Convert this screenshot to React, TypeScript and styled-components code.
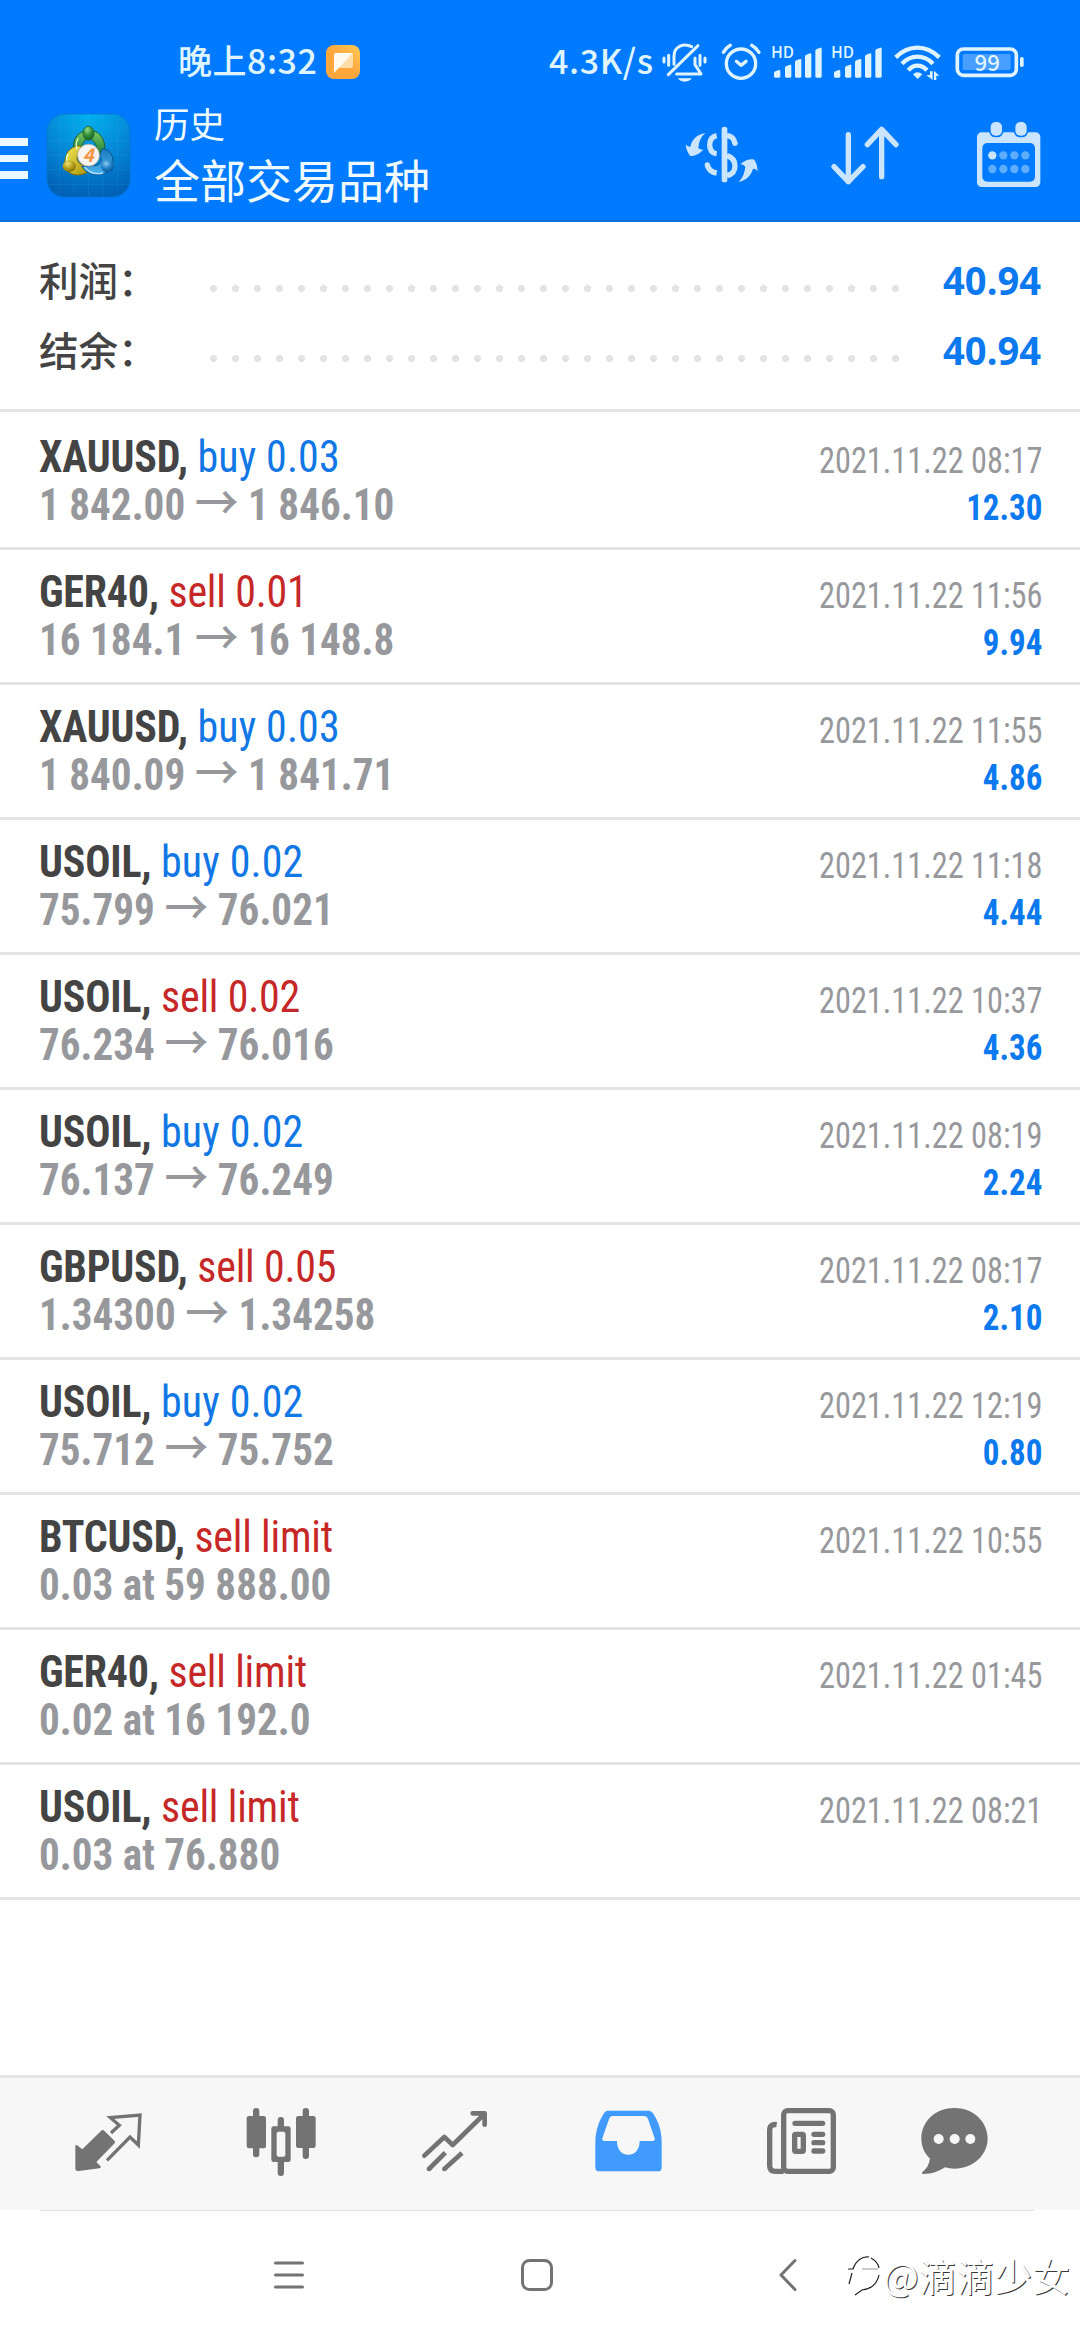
import React from "react";
import styled, { createGlobalStyle } from "styled-components";

const CJK = '"Noto Sans CJK SC", "Noto Sans", sans-serif';
const CONDENSED = '"Roboto Condensed", Roboto, "Noto Sans CJK SC", sans-serif';

const Global = createGlobalStyle`
  *, *::before, *::after { box-sizing: border-box; }
  body { margin: 0; background: #fff; }
`;

const Screen = styled.div`
  position: relative;
  display: flex;
  flex-direction: column;
  width: 1080px;
  height: 2340px;
  overflow: hidden;
  background: #fff;
  font-family: ${CJK};
`;

/* ---------- header ---------- */

const Header = styled.header`
  display: flex;
  flex-direction: column;
  height: 222px;
  background: #007aff;
  border-bottom: 2px solid #1070dc;
`;

const StatusBar = styled.div`
  display: flex;
  align-items: flex-start;
  height: 100px;
  padding: 34px 0 0 178px;
  color: #dff4ff;
`;

const StatusText = styled.span`
  font-size: 34px;
  font-weight: 500;
  line-height: 52px;
  letter-spacing: 0.6px;
  white-space: nowrap;
`;

const Clock = styled(StatusText)`
  width: 148px;
  letter-spacing: 0.5px;
`;

const Speed = styled(StatusText)`
  width: 112px;
  margin-left: 189px;
`;

const Glyph = styled.svg<{ $gap?: number; $top?: number }>`
  display: block;
  flex: none;
  overflow: visible;
  margin: ${(p) => p.$top ?? 0}px 0 0 ${(p) => p.$gap ?? 0}px;
`;

const Toolbar = styled.div`
  display: flex;
  align-items: flex-start;
  height: 120px;
`;

const MenuButton = styled.div`
  display: flex;
  flex-direction: column;
  gap: 9px;
  width: 28px;
  padding-top: 38px;
`;

const MenuBar = styled.span`
  height: 7.5px;
  background: #ecf8ff;
`;

const LogoBox = styled.div`
  width: 83px;
  height: 83px;
  margin: 14px 0 0 19px;
`;

const Titles = styled.div`
  display: flex;
  flex-direction: column;
  width: 522px;
  margin: -1px 0 0 24px;
  color: #effaff;
`;

const Caption = styled.div`
  font-size: 35.5px;
  line-height: 48px;
`;

const Title = styled.div`
  font-size: 46px;
  line-height: 62px;
`;

/* ---------- summary ---------- */

const Summary = styled.section`
  display: flex;
  flex-direction: column;
  height: 190px;
  padding: 24px 39px 0;
  border-bottom: 3px solid #e3e3e3;
`;

const SummaryRow = styled.div`
  display: flex;
  align-items: center;
  height: 70px;
`;

const SummaryLabel = styled.span`
  width: 171px;
  margin-bottom: 6px;
  font-size: 39.5px;
  font-weight: 500;
  color: #444;
`;

const Dots = styled.span`
  flex: none;
  width: 689px;
  height: 7px;
  margin-top: 14px;
  background: radial-gradient(circle at 3.5px 3.5px, #e3e3e3 3.2px, transparent 3.9px) 0 0 / 22px 7px repeat-x;
`;

const SummaryValue = styled.span`
  flex: 1;
  margin-bottom: 2px;
  text-align: right;
  font-family: "Noto Sans", sans-serif;
  font-size: 39.5px;
  font-weight: 700;
  color: #0c79ee;
  transform: scaleX(0.965);
  transform-origin: right;
`;

/* ---------- history ---------- */

const List = styled.main`
  flex: 1;
  padding-top: 3px;
`;

const Deal = styled.article`
  display: grid;
  grid-template-columns: 1fr auto;
  grid-template-rows: 48px 48px;
  height: 135px;
  padding: 18px 38px 0 39px;
  border-bottom: 3px solid #e3e3e3;
  font-family: ${CONDENSED};
  font-size: 44px;
  line-height: 48px;
  white-space: nowrap;
`;

const Order = styled.div`
  transform: scaleX(0.953);
  transform-origin: left;
`;

const Symbol = styled.b`
  font-weight: 700;
  letter-spacing: -0.2px;
  color: #444;
`;

const Side = styled.span<{ $sell: boolean }>`
  letter-spacing: ${(p) => (p.$sell ? "-0.2px" : "0.15px")};
  color: ${(p) => (p.$sell ? "#c62828" : "#1177e4")};
`;

const Price = styled.div`
  font-weight: 700;
  color: #97989c;
  transform: scaleX(0.935);
  transform-origin: left;
`;

const Arrow = styled.span`
  font-family: ${CJK};
  font-size: 47px;
  font-weight: 500;
  line-height: 0;
`;

const Time = styled.div`
  font-size: 36.5px;
  line-height: 55px;
  text-align: right;
  color: #97989b;
  transform: scaleX(0.885);
  transform-origin: right;
`;

const Profit = styled.div`
  font-size: 36px;
  line-height: 55px;
  font-weight: 700;
  text-align: right;
  color: #0c79ee;
  transform: scaleX(0.915);
  transform-origin: right;
`;

/* ---------- bottom ---------- */

const TabBar = styled.nav`
  display: flex;
  height: 135px;
  padding: 27px 0 0 75px;
  border-top: 3px solid #e3e5e4;
  background: #f7f7f7;
`;

const SystemNav = styled.footer`
  display: flex;
  flex-direction: column;
  height: 130px;
`;

const Hairline = styled.div`
  height: 1px;
  margin: 0 46px 0 40px;
  background: #e0e0e0;
`;

const SystemKeys = styled.div`
  display: flex;
  padding: 48px 0 0 274px;
`;

const Watermark = styled.div`
  position: absolute;
  left: 847px;
  top: 2247px;
  display: flex;
  align-items: center;
  height: 54px;
  color: #fff;
  font-size: 37.8px;
  white-space: nowrap;
  text-shadow: 1px 1px 0 rgba(0, 0, 0, 0.8);
`;

const HD = ({ x }: { x: number }) => (
  <>
    <text x={x - 3} y="84" fontSize="48" fontWeight="500">HD</text>
    {[120, 104, 87, 70, 53].map((top, i) => {
      const l = x + 6 + [0, 33, 63, 93, 124][i];
      return <path key={top} d={`M${l} ${top + 9}Q${l} ${top + 6} ${l + 4} ${top + 4}L${l + 15} ${top}Q${l + 19} ${top - 1} ${l + 19} ${top + 4}V139Q${l + 19} 143 ${l + 15} 143H${l + 4}Q${l} 143 ${l} 139Z`} />;
    })}
  </>
);

const Logo = () => (
  <Glyph width="83" height="83" viewBox="50 43 250 250">
    <defs>
      <radialGradient id="sky" cx=".5" cy="0" r="1">
        <stop offset="0" stopColor="#02b2ee" /><stop offset=".55" stopColor="#0486d6" /><stop offset="1" stopColor="#0061b6" />
      </radialGradient>
      <linearGradient id="grn" x2="0" y2="1"><stop offset="0" stopColor="#7fce68" /><stop offset="1" stopColor="#187a35" /></linearGradient>
      <linearGradient id="yel" x2="1" y2="1"><stop offset="0" stopColor="#f5ec5c" /><stop offset="1" stopColor="#ab9308" /></linearGradient>
      <linearGradient id="blu" x2="0" y2="1"><stop offset="0" stopColor="#1b78bd" /><stop offset="1" stopColor="#4cb5ef" /></linearGradient>
      <radialGradient id="grnHead" cx=".4" cy=".25" r=".75"><stop offset="0" stopColor="#9bdd8b" /><stop offset=".5" stopColor="#36953b" /><stop offset="1" stopColor="#176226" /></radialGradient>
      <radialGradient id="yelHead" cx=".4" cy=".3" r=".75"><stop offset="0" stopColor="#eee074" /><stop offset=".5" stopColor="#b7a31d" /><stop offset="1" stopColor="#776500" /></radialGradient>
      <radialGradient id="bluHead" cx=".4" cy=".3" r=".75"><stop offset="0" stopColor="#8ccdf3" /><stop offset=".5" stopColor="#2383c7" /><stop offset="1" stopColor="#065294" /></radialGradient>
    </defs>
    <rect x="50" y="43" width="250" height="250" rx="52" fill="url(#sky)" stroke="#0875cf" strokeWidth="2" />
    <path d="M88 46V290M131 43V293M175 43V293M218 43V293M262 46V290M53 80H297M50 124H300M50 167H300M50 211H300M53 255H297" stroke="#66c9f5" strokeOpacity=".16" strokeWidth="2" />
    <g strokeWidth="3">
      <path d="M136 160C118 126 144 92 177 92C213 92 232 130 221 165L200 160C204 140 192 118 174 118C160 120 155 134 157 150Z" fill="url(#grn)" stroke="#21622b" />
      <path d="M150 138C119 140 101 162 104 200C112 226 140 234 170 220L160 198C140 192 132 168 152 158Z" fill="url(#yel)" stroke="#766909" />
      <path d="M155 201C175 233 221 235 244 205C256 178 244 149 217 147L208 170C220 181 212 198 194 198Z" fill="url(#blu)" stroke="#0a568d" />
      <path d="M163 202Q184 229 219 221" fill="none" stroke="#b9e4ff" strokeWidth="4" />
      <path d="M144 116Q134 132 141 150M113 162Q106 176 110 190" fill="none" stroke="#e8ffc4" strokeWidth="4" />
    </g>
    <ellipse cx="175" cy="101" rx="17" ry="21" fill="url(#grnHead)" stroke="#205c27" strokeWidth="2" />
    <ellipse cx="117" cy="200" rx="20" ry="18" fill="url(#yelHead)" />
    <ellipse cx="232" cy="200" rx="20" ry="19" fill="url(#bluHead)" />
    <circle cx="175" cy="167" r="33" fill="#f6f3f0" stroke="#a8a698" strokeWidth="2" />
    <text x="174" y="187" textAnchor="middle" fontFamily={CJK} fontSize="56" fontWeight="700" fontStyle="italic" fill="#f39444">4</text>
  </Glyph>
);

const deals: [string, string, string[], string, string?][] = [
  ["XAUUSD", "buy 0.03", ["1 842.00", "1 846.10"], "2021.11.22 08:17", "12.30"],
  ["GER40", "sell 0.01", ["16 184.1", "16 148.8"], "2021.11.22 11:56", "9.94"],
  ["XAUUSD", "buy 0.03", ["1 840.09", "1 841.71"], "2021.11.22 11:55", "4.86"],
  ["USOIL", "buy 0.02", ["75.799", "76.021"], "2021.11.22 11:18", "4.44"],
  ["USOIL", "sell 0.02", ["76.234", "76.016"], "2021.11.22 10:37", "4.36"],
  ["USOIL", "buy 0.02", ["76.137", "76.249"], "2021.11.22 08:19", "2.24"],
  ["GBPUSD", "sell 0.05", ["1.34300", "1.34258"], "2021.11.22 08:17", "2.10"],
  ["USOIL", "buy 0.02", ["75.712", "75.752"], "2021.11.22 12:19", "0.80"],
  ["BTCUSD", "sell limit", ["0.03 at 59 888.00"], "2021.11.22 10:55"],
  ["GER40", "sell limit", ["0.02 at 16 192.0"], "2021.11.22 01:45"],
  ["USOIL", "sell limit", ["0.03 at 76.880"], "2021.11.22 08:21"],
];

const GREY = "#737373";

export default function App() {
  return (
    <Screen>
      <Global />
      <Header>
        <StatusBar>
          <Clock>晚上8:32</Clock>
          <Glyph width="34" height="34" viewBox="0 0 34 34" $top={11}>
            <defs><linearGradient id="note" x1="1" y1="0" x2="0" y2="1"><stop offset="0" stopColor="#ffcb55" /><stop offset=".5" stopColor="#ffa63d" /></linearGradient></defs>
            <rect width="34" height="34" rx="8" fill="url(#note)" />
            <path d="M11 23L27 8V21Q27 23 25 23Z" fill="#ffdca8" />
            <path d="M8 28V10Q8 8 10 8H27L8 28Z" fill="#fffaf0" />
          </Glyph>
          <Speed>4.3K/s</Speed>
          <Glyph width="363" height="40" viewBox="64 36 1089 120" fill="#dff4ff" fontFamily={CJK} $gap={1} $top={8}>
            <g fill="none" stroke="#dff4ff" strokeWidth="9" strokeLinecap="round" strokeLinejoin="round">
              <path d="M100 103V78C100 48 130 38 153 50M83 134L172 47M163 84V104L181 132H108M70 84V96M84 76V106M178 76V106M193 84V96" />
              <circle cx="301" cy="101" r="44" strokeWidth="10" />
              <path d="M287 94L301 106L316 94M248 67Q256 53 269 46M333 46Q346 53 355 67" strokeWidth="10" />
            </g>
            <path d="M112 145H153Q147 155 132 155Q118 155 112 145Z" />
            <HD x={394} />
            <HD x={574} />
            <g fill="none" stroke="#dff4ff" strokeWidth="13">
              <path d="M765 82Q795 53 830 53Q866 53 896 82M784 101Q805 80 830 80Q856 80 877 101M803 121Q815 107 830 107Q846 107 859 121" />
            </g>
            <path d="M817 133Q830 121 845 133L831 147Z" />
            <path d="M868 124H876V150L857 135H868ZM880 150V122L896 137H887V150Z" />
            <rect x="966" y="72" width="144" height="48" rx="5" fill="#489fff" />
            <rect x="950" y="57" width="177" height="79" rx="18" fill="none" stroke="#dff4ff" strokeWidth="11" />
            <rect x="1138" y="81" width="11" height="30" rx="5" />
            <text x="1040" y="122" textAnchor="middle" fontSize="67" fontWeight="500">99</text>
          </Glyph>
        </StatusBar>
        <Toolbar>
          <MenuButton><MenuBar /><MenuBar /><MenuBar /></MenuButton>
          <LogoBox><Logo /></LogoBox>
          <Titles>
            <Caption>历史</Caption>
            <Title>全部交易品种</Title>
          </Titles>
          <Glyph width="73" height="66" viewBox="136 276 219 198" $gap={9} fill="#cbe5ff" $top={22}>
            <rect x="246" y="290" width="17" height="167" rx="8" />
            <g fill="none" stroke="#cbe5ff" strokeWidth="16">
              <path d="M231 317C217 320 210 330 210 345C210 360 217 369 231 372M262 377C278 382 286 393 286 408C286 424 278 433 262 437M231 429C216 427 207 418 203 406" />
              <path d="M262 316C276 318 284 328 286 341" />
            </g>
            <circle cx="286" cy="340" r="8" /><circle cx="203" cy="405" r="8" />
            <path d="M197 309C172 313 157 328 152 350Q143 351 138 343Q140 365 152 378Q173 378 191 359Q182 360 176 354C177 336 184 320 197 309Z" />
            <path d="M297 456C320 452 333 437 340 417Q348 414 354 424Q353 399 342 388Q320 386 302 403Q311 403 317 410C315 428 309 444 297 456Z" />
          </Glyph>
          <Glyph width="73" height="66" viewBox="564 276 219 198" $gap={70} fill="none" stroke="#cbe5ff" strokeWidth="16" strokeLinecap="round" strokeLinejoin="round" $top={22}>
            <path d="M625 314V455M582 410L625 455L669 410M725 440V298M682 344L725 298L768 344" />
          </Glyph>
          <Glyph width="64" height="66" viewBox="1010 276 192 198" $gap={76} fill="#cbe5ff" $top={22}>
            <rect x="1010" y="307" width="190" height="164" rx="14" />
            <rect x="1026" y="339" width="158" height="116" rx="15" fill="#007aff" />
            <g stroke="#007aff" strokeWidth="10" paintOrder="stroke">
              <rect x="1051" y="276" width="34" height="41" rx="15" /><rect x="1125" y="276" width="34" height="41" rx="15" />
            </g>
            {[376, 417].map((y) => [1056, 1089, 1122, 1155].map((x) => (
              <circle key={`${x}-${y}`} cx={x} cy={y} r="12.5" fill={x === 1056 && y === 376 ? "#cbe5ff" : "#5fadff"} />
            )))}
          </Glyph>
        </Toolbar>
      </Header>

      <Summary>
        {["利润：", "结余："].map((label) => (
          <SummaryRow key={label}>
            <SummaryLabel>{label}</SummaryLabel>
            <Dots />
            <SummaryValue>40.94</SummaryValue>
          </SummaryRow>
        ))}
      </Summary>

      <List>
        {deals.map(([symbol, side, prices, time, profit]) => (
          <Deal key={symbol + time}>
            <Order><Symbol>{symbol},</Symbol> <Side $sell={side.startsWith("sell")}>{side}</Side></Order>
            <Time>{time}</Time>
            <Price>{prices[0]}{prices[1] && <> <Arrow>→</Arrow> {prices[1]}</>}</Price>
            {profit && <Profit>{profit}</Profit>}
          </Deal>
        ))}
      </List>

      <TabBar>
        <Glyph width="67" height="75" viewBox="45 45 201 225" fill={GREY}>
          <path d="M126 120Q129 119 131 121L164 153Q166 156 164 160L109 216L123 230Q122 234 118 235L56 243Q47 243 46 236V168Q47 163 51 166L67 178Z" />
          <path d="M153 129L178 106L151 83L240 75L235 165L210 141L141 211" fill="none" stroke={GREY} strokeWidth="10" />
        </Glyph>
        <Glyph width="70" height="75" viewBox="558 45 210 225" $gap={104} fill={GREY}>
          <rect x="560" y="78" width="58" height="97" rx="7" /><rect x="579" y="54" width="19" height="148" rx="9" />
          <rect x="708" y="78" width="59" height="96" rx="7" /><rect x="728" y="54" width="19" height="153" rx="9" />
          <rect x="653" y="81" width="19" height="60" rx="9" /><rect x="653" y="200" width="19" height="58" rx="9" />
          <rect x="634" y="109" width="58" height="107" rx="7" /><rect x="650" y="125" width="26" height="75" rx="6" fill="#f7f7f7" />
        </Glyph>
        <Glyph width="66" height="75" viewBox="1085 45 198 225" $gap={106} fill="none" stroke={GREY} strokeWidth="14" strokeLinejoin="round">
          <path d="M1092 197L1152 141L1177 165L1272 72M1237 70H1273V104" strokeLinecap="round" />
          <path d="M1106 237L1155 188M1152 237L1205 189" />
          <path d="M1106 237h.1M1152 237h.1" strokeLinecap="round" />
        </Glyph>
        <Glyph width="67" height="75" viewBox="162 135 201 225" $gap={107}>
          <path fillRule="evenodd" fill="#419bff" d="M200 152H324Q331 152 336 160C353 185 361 212 362 243V323Q362 334 350 334H175Q163 334 163 323V243C164 212 174 181 190 158Q194 152 200 152ZM215 168Q208 168 205 175L184 235Q183 243 190 243H228C228 267 240 284 262 284C284 284 296 267 296 243H334Q343 243 341 235L321 177Q318 168 309 168Z" />
        </Glyph>
        <Glyph width="70" height="75" viewBox="679 135 210 225" $gap={105} fill="none" stroke={GREY} strokeWidth="16">
          <rect x="729" y="152" width="149" height="182" rx="12" />
          <path d="M708 194Q687 191 687 211V317Q687 334 704 334H729" />
          <path d="M763 190H846M820 223H846M820 248H846M820 273H846" strokeLinecap="round" />
          <rect x="762" y="223" width="26" height="51" rx="3" />
        </Glyph>
        <Glyph width="67" height="75" viewBox="1138 135 201 225" $gap={84} fill={GREY}>
          <path d="M1238 144C1294 144 1338 184 1338 235S1294 326 1238 326Q1223 326 1210 322C1190 335 1166 343 1143 342Q1138 339 1143 335C1155 326 1163 312 1165 296C1148 281 1139 258 1139 235C1139 184 1182 144 1238 144Z" />
          <g fill="#f7f7f7"><circle cx="1191" cy="237" r="15" /><circle cx="1239" cy="237" r="15" /><circle cx="1286" cy="237" r="15" /></g>
        </Glyph>
      </TabBar>

      <SystemNav>
        <Hairline />
        <SystemKeys>
          <Glyph width="30" height="32" viewBox="0 0 30 32" fill="none" stroke={GREY} strokeWidth="3" strokeLinecap="round"><path d="M1.5 4H28.5M1.5 16H28.5M1.5 28H28.5" /></Glyph>
          <Glyph width="32" height="32" viewBox="0 0 32 32" $gap={217} fill="none" stroke={GREY} strokeWidth="3"><rect x="1.5" y="1.5" width="29" height="29" rx="7" /></Glyph>
          <Glyph width="18" height="32" viewBox="0 0 18 32" $gap={226} fill="none" stroke={GREY} strokeWidth="3" strokeLinecap="round" strokeLinejoin="round"><path d="M16 1.5L2 16L16 30.5" /></Glyph>
        </SystemKeys>
      </SystemNav>

      <Watermark>
        <Glyph width="36" height="42" viewBox="0 0 36 42" fill="none" stroke="#222" strokeWidth="1.2">
          <path d="M1 16H6C9 7 16 3 22 4M24 5Q31 9 32 15M5 20L2 31M32 22C30 32 23 36 15 37L8 42" />
          <path d="M15 16H31" stroke="#aaa" />
        </Glyph>
        <span>@滴滴少女</span>
      </Watermark>
    </Screen>
  );
}
